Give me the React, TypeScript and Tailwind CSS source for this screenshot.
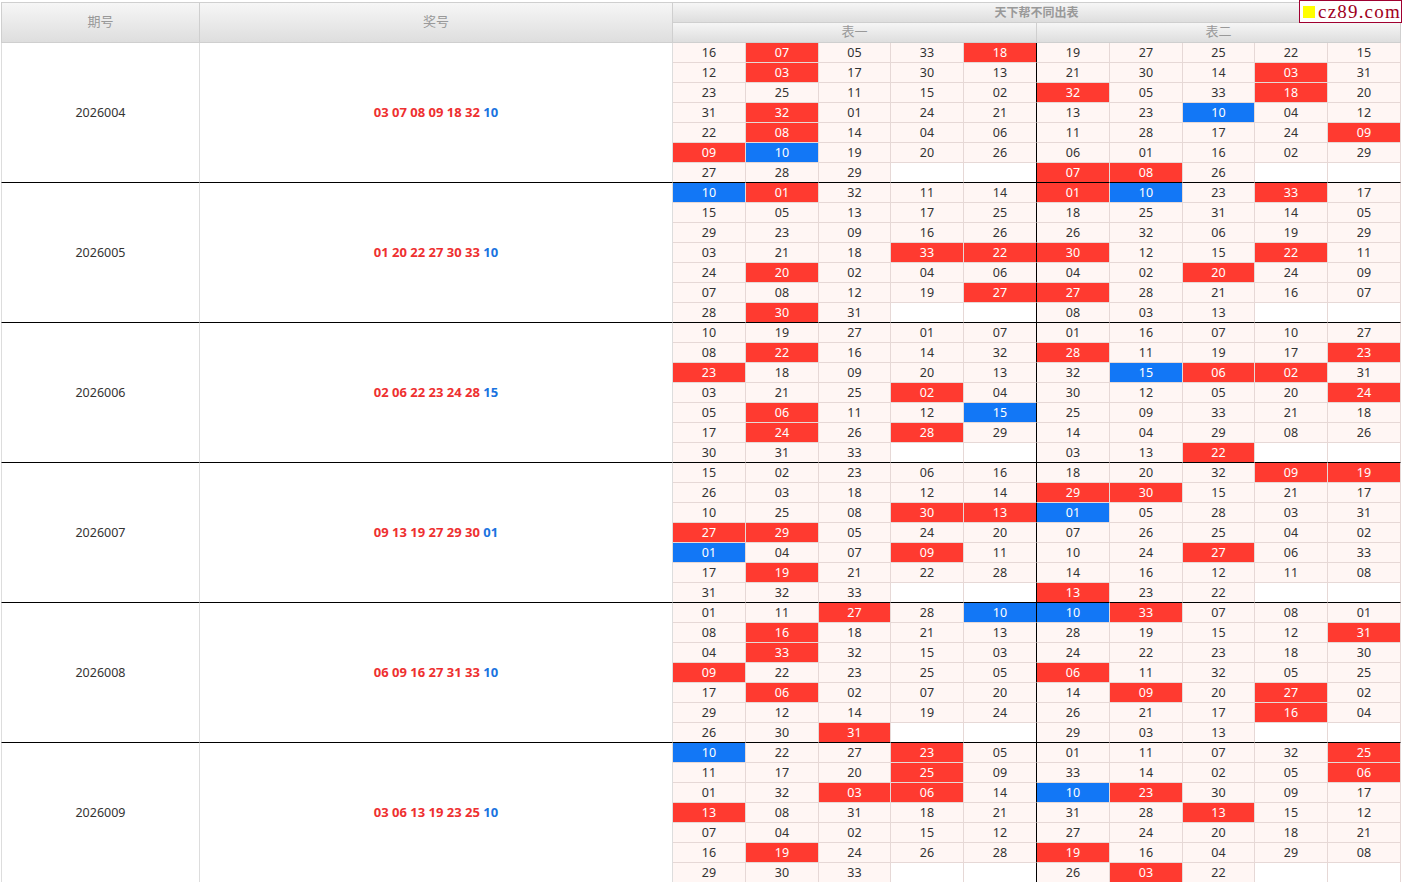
const groups = [
  {
    id: "2026004",
    reds: ["03", "07", "08", "09", "18", "32"],
    blue: "10",
    rows: [
      "16 07 05 33 18 19 27 25 22 15",
      "12 03 17 30 13 21 30 14 03 31",
      "23 25 11 15 02 32 05 33 18 20",
      "31 32 01 24 21 13 23 10 04 12",
      "22 08 14 04 06 11 28 17 24 09",
      "09 10 19 20 26 06 01 16 02 29",
      "27 28 29 - - 07 08 26 - -",
    ],
  },
  {
    id: "2026005",
    reds: ["01", "20", "22", "27", "30", "33"],
    blue: "10",
    rows: [
      "10 01 32 11 14 01 10 23 33 17",
      "15 05 13 17 25 18 25 31 14 05",
      "29 23 09 16 26 26 32 06 19 29",
      "03 21 18 33 22 30 12 15 22 11",
      "24 20 02 04 06 04 02 20 24 09",
      "07 08 12 19 27 27 28 21 16 07",
      "28 30 31 - - 08 03 13 - -",
    ],
  },
  {
    id: "2026006",
    reds: ["02", "06", "22", "23", "24", "28"],
    blue: "15",
    rows: [
      "10 19 27 01 07 01 16 07 10 27",
      "08 22 16 14 32 28 11 19 17 23",
      "23 18 09 20 13 32 15 06 02 31",
      "03 21 25 02 04 30 12 05 20 24",
      "05 06 11 12 15 25 09 33 21 18",
      "17 24 26 28 29 14 04 29 08 26",
      "30 31 33 - - 03 13 22 - -",
    ],
  },
  {
    id: "2026007",
    reds: ["09", "13", "19", "27", "29", "30"],
    blue: "01",
    rows: [
      "15 02 23 06 16 18 20 32 09 19",
      "26 03 18 12 14 29 30 15 21 17",
      "10 25 08 30 13 01 05 28 03 31",
      "27 29 05 24 20 07 26 25 04 02",
      "01 04 07 09 11 10 24 27 06 33",
      "17 19 21 22 28 14 16 12 11 08",
      "31 32 33 - - 13 23 22 - -",
    ],
  },
  {
    id: "2026008",
    reds: ["06", "09", "16", "27", "31", "33"],
    blue: "10",
    rows: [
      "01 11 27 28 10 10 33 07 08 01",
      "08 16 18 21 13 28 19 15 12 31",
      "04 33 32 15 03 24 22 23 18 30",
      "09 22 23 25 05 06 11 32 05 25",
      "17 06 02 07 20 14 09 20 27 02",
      "29 12 14 19 24 26 21 17 16 04",
      "26 30 31 - - 29 03 13 - -",
    ],
  },
  {
    id: "2026009",
    reds: ["03", "06", "13", "19", "23", "25"],
    blue: "10",
    rows: [
      "10 22 27 23 05 01 11 07 32 25",
      "11 17 20 25 09 33 14 02 05 06",
      "01 32 03 06 14 10 23 30 09 17",
      "13 08 31 18 21 31 28 13 15 12",
      "07 04 02 15 12 27 24 20 18 21",
      "16 19 24 26 28 19 16 04 29 08",
      "29 30 33 - - 26 03 22 - -",
    ],
  },
];

const colWidths = [73, 73, 72, 73, 73, 73, 73, 72, 73, 73];
const headCell =
  "bg-gradient-to-b from-[#f6f6f6] to-[#dedede] border-r border-b border-[#cfcfcf] text-[#999999] px-0 pt-0 text-center text-[13px] leading-[17px]";

const App = () => {
  return (
    <div
      className="relative w-[1402px] h-[882px] overflow-hidden bg-white pt-[2px] pl-[1px] text-[12.5px] text-[#333333]"
      style={{ fontFamily: '"Noto Sans", "Noto Sans CJK SC", sans-serif' }}
    >
      <table className="table-fixed border-separate border-spacing-0 w-[1400px]">
        <colgroup>
          <col className="w-[199px]" />
          <col className="w-[473px]" />
          {colWidths.map((w, i) => (
            <col key={i} style={{ width: w }} />
          ))}
        </colgroup>
        <thead>
          <tr className="h-[21px]">
            <th rowSpan={2} className={`${headCell} border-t border-l font-normal pb-[2px]`}>期号</th>
            <th rowSpan={2} className={`${headCell} border-t font-normal pb-[2px]`}>奖号</th>
            <th colSpan={10} className={`${headCell} border-t font-bold pb-0`}>
              <span className="text-[12px]">天下帮不同出表</span>
            </th>
          </tr>
          <tr className="h-[20px]">
            <th colSpan={5} className={`${headCell} font-normal pb-[2px]`}>表一</th>
            <th colSpan={5} className={`${headCell} font-normal pb-[2px]`}>表二</th>
          </tr>
        </thead>
        <tbody>
          {groups.map((g) =>
            g.rows.map((row, r) => {
              const last = r === g.rows.length - 1;
              return (
                <tr key={g.id + r} className="h-[20px]">
                  {r === 0 && (
                    <>
                      <td rowSpan={7} className="text-center border-l border-r border-b border-l-[#dddddd] border-r-[#dddddd] border-b-black px-0 pb-0 pt-[2px]">
                        {g.id}
                      </td>
                      <td rowSpan={7} className="text-center border-r border-b border-r-[#dddddd] border-b-black p-0 font-bold text-[13px]">
                        <span className="text-[#ee3030]">{g.reds.join(" ")}</span>{" "}
                        <span className="text-[#1a73e0]">{g.blue}</span>
                      </td>
                    </>
                  )}
                  {row.split(" ").map((n, c) => {
                    const empty = n === "-";
                    let bg = "bg-[#fff6f4]";
                    if (empty) bg = "bg-white";
                    else if (n === g.blue) bg = "bg-[#1277f6] text-white";
                    else if (g.reds.includes(n)) bg = "bg-[#ff3a30] text-white";
                    const right = c === 4 ? "border-r-black" : "border-r-[#e6d8d6]";
                    const bottom = last ? "border-b-black" : "border-b-[#e6d8d6]";
                    return (
                      <td key={c} className={`${bg} ${right} ${bottom} border-r border-b p-0 text-center leading-[19px]`}>
                        {empty ? "" : n}
                      </td>
                    );
                  })}
                </tr>
              );
            })
          )}
        </tbody>
      </table>

      <div
        className="absolute top-0 left-[1299px] w-[103px] h-[23px] bg-white border border-[#a00030] flex items-center pl-[3px] gap-[3px] text-[#a00020] text-[19px] tracking-[1.2px] leading-none"
        style={{ fontFamily: '"Liberation Serif", serif' }}
      >
        <span className="w-[12px] h-[12px] bg-[#ffff00] shrink-0" />
        <span>cz89.com</span>
      </div>
    </div>
  );
};

export default App;
